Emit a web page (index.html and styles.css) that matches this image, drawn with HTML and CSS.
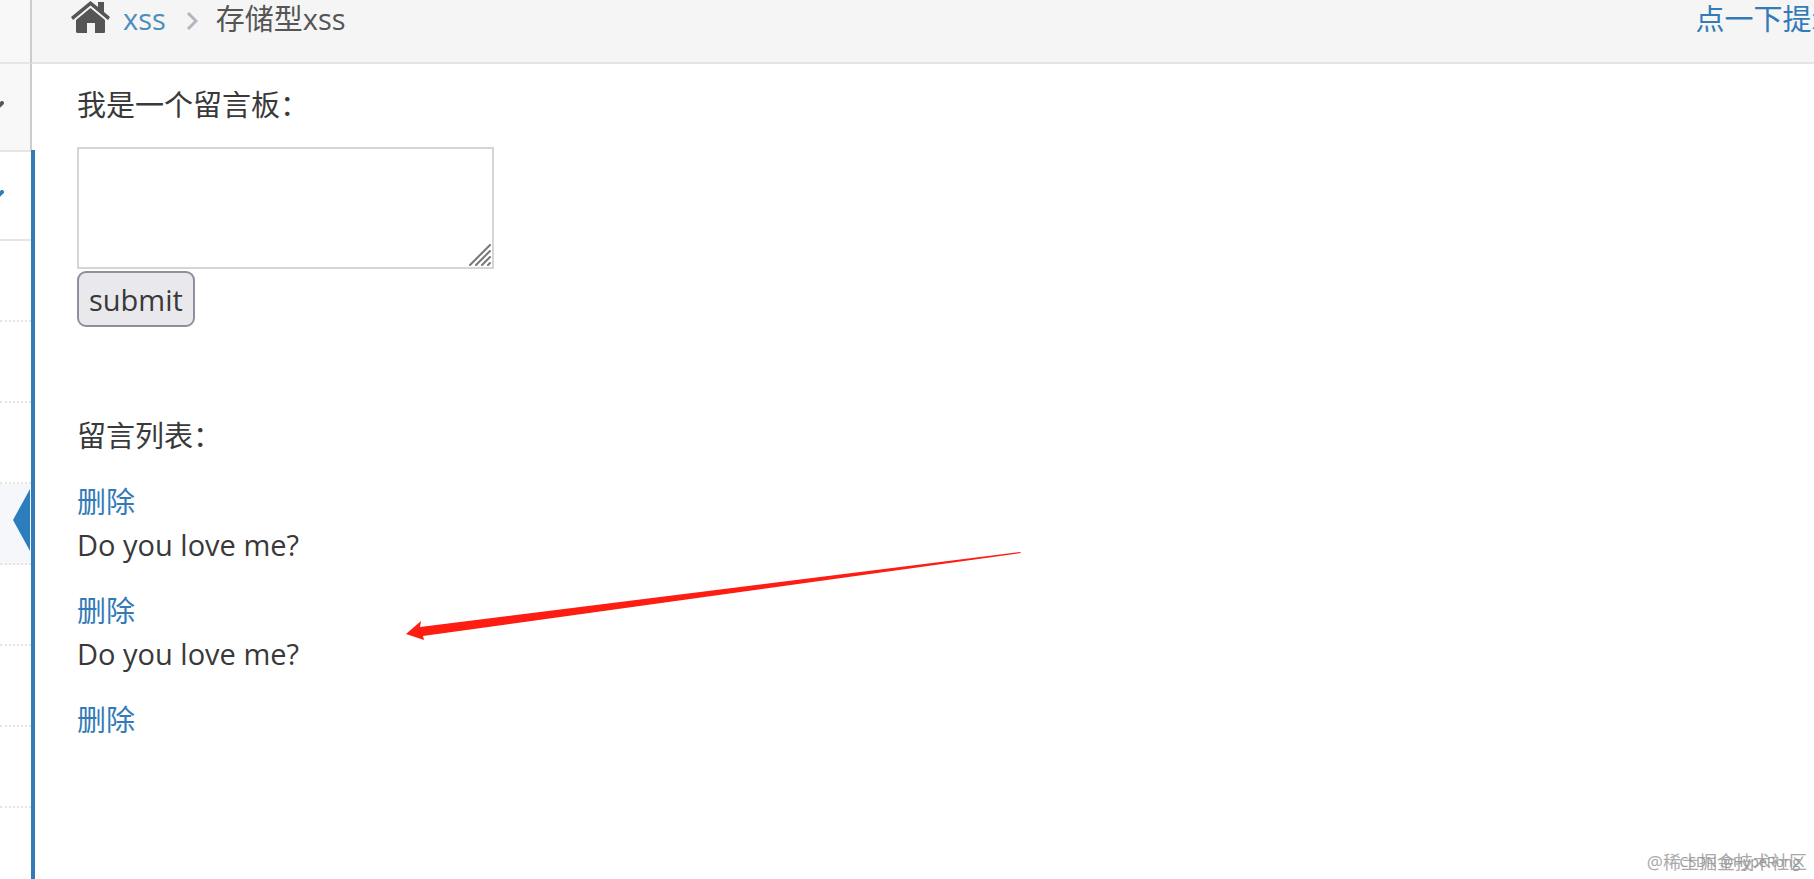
FILE: index.html
```
<!DOCTYPE html>
<html lang="zh-CN">
    <head>
        <meta charset="utf-8">
        <title>存储型xss</title>
        <link rel="stylesheet" href="styles.css">
    </head>
    <body>
        <div class="page">
            <nav class="sidebar" aria-label="menu">
                <div class="item first"></div>
                <div class="item second">
                    <svg class="arrow" width="16" height="12" viewBox="0 0 16 12"><path d="M2 2l6 6 6-6" fill="none" stroke="currentColor" stroke-width="4" stroke-linecap="round"/></svg>
                </div>
                <div class="opened">
                    <div class="item open">
                        <svg class="arrow" width="16" height="12" viewBox="0 0 16 12"><path d="M2 2l6 6 6-6" fill="none" stroke="currentColor" stroke-width="4" stroke-linecap="round"/></svg>
                    </div>
                    <ul class="submenu">
                        <li></li>
                        <li></li>
                        <li></li>
                        <li class="active">
                            <svg class="marker" width="17" height="62" viewBox="0 0 17 62"><path d="M17 0v62L0 31z" fill="#2b7dbc"/></svg>
                        </li>
                        <li></li>
                        <li></li>
                        <li></li>
                        <li></li>
                    </ul>
                </div>
            </nav>

            <div class="main">
                <div class="breadcrumbs">
                    <svg class="home" width="40" height="32" viewBox="0 0 40 32">
                        <path d="M19.500 0L27 6V1h6v10l6 5-2 3L19.500 4.500 2 19l-2-3z" fill="#555"/>
                        <path d="M19.500 7L34 19v12q0 1-1 1h-9V22h-8v10H7q-2 0-2-1V19z" fill="#555"/>
                    </svg>
                    <a class="crumb" href="#">xss</a>
                    <svg class="sep" width="12" height="18" viewBox="0 0 12 18"><path d="M2 1l8 8-8 8" fill="none" stroke="#b2b6bf" stroke-width="3"/></svg>
                    <span>存储型xss</span>
                    <a class="tip" href="#">点一下提示~</a>
                </div>

                <div class="content">
                    <form action="#" method="post">
                        <label class="title" for="message">我是一个留言板：</label>
                        <div class="box">
                            <textarea id="message" name="message"></textarea>
                            <svg class="grip" width="22" height="22" viewBox="0 0 22 22"><path d="M1 21L21 1M7 21L21 7M13 21l8-8M19 21l2-2" fill="none" stroke="#777" stroke-width="2" stroke-linecap="round"/></svg>
                        </div>
                        <button class="submit" type="submit">submit</button>
                    </form>

                    <div class="list">
                        <p>留言列表：</p>
                        <p><a href="#">删除</a><br>Do you love me?</p>
                        <p><a href="#">删除</a><br>Do you love me?</p>
                        <p><a href="#">删除</a></p>
                    </div>
                </div>
            </div>
        </div>

        <!-- red pointer over the second message -->
        <svg class="pointer" width="616" height="90" viewBox="0 0 616 90"><path d="M0 84L15 71l-1 6L614 2l1 1L17 86l1 4z" fill="#fd1d12"/></svg>

        <div class="mark">@稀土掘金技术社区</div>
        <div class="mark author">CSDN @HypeRong</div>
    </body>
</html>
```

FILE: styles.css
```
body {
    margin: 0;
    font-family: "Open Sans", "Noto Sans CJK SC", sans-serif;
    font-size: 29px;
    line-height: 43px;
    color: #393939;
    background-color: #fff;
    overflow: hidden;
}

a {
    color: #337ab7;
    text-decoration: none;
}

ul {
    list-style: none;
    margin: 0;
    padding: 0;
}

svg {
    display: block;
}

.page {
    display: flex;
    height: 100vh;
}

/* sidebar */
.sidebar {
    display: flex;
    flex-direction: column;
    flex: none;
    width: 35px;
    overflow: hidden;
}

.item {
    box-sizing: border-box;
    display: flex;
    flex: none;
    align-items: center;
    width: 32px;
    height: 64px;
    border-right: 2px solid #ccc;
    border-bottom: 2px solid #e5e5e5;
    background-color: #f8f8f8;
    color: #585858;
}

.item.second {
    height: 86px;
    border-bottom: none;
}

.item.open {
    width: auto;
    height: 91px;
    border-right: none;
    border-top: 2px solid #e5e5e5;
    background-color: #fff;
    color: #2b7dbc;
}

.arrow {
    flex: none;
    margin-left: -12px;
}

.opened {
    flex: 1;
    min-height: 0;
    border-right: 4px solid #337ab7;
}

.submenu li {
    box-sizing: border-box;
    display: flex;
    justify-content: flex-end;
    height: 81px;
    padding: 5px 1px 0 0;
    border-bottom: 2px dotted #e4e4e4;
}

.submenu .active {
    background-color: #f5f7fa;
}

/* main */
.main {
    flex: 1;
    min-width: 0;
}

.breadcrumbs {
    box-sizing: border-box;
    display: flex;
    align-items: flex-start;
    height: 64px;
    margin-left: -3px;
    padding-left: 39px;
    border-bottom: 2px solid #e5e5e5;
    background-color: #f5f5f5;
    color: #555;
    line-height: 38px;
    white-space: nowrap;
    overflow: hidden;
}

.home {
    margin-top: 1px;
}

.crumb {
    margin-left: 12px;
    color: #4c8fbd;
}

.sep {
    margin: 12px 18px 0 20px;
}

.tip {
    margin-left: auto;
    margin-right: -43px;
}

.content {
    padding: 19px 42px;
}

.title {
    display: block;
    margin-bottom: 21px;
}

.box {
    position: relative;
    width: 417px;
    margin-bottom: 2px;
}

textarea {
    box-sizing: border-box;
    display: block;
    width: 100%;
    height: 122px;
    padding: 8px;
    border: 2px solid #d5d5d5;
    font: inherit;
    resize: none;
}

.grip {
    position: absolute;
    right: 3px;
    bottom: 3px;
}

.submit {
    display: block;
    height: 56px;
    padding: 0 10px;
    border: 2px solid #8f8f9d;
    border-radius: 9px;
    background-color: #e9e9ed;
    color: #393939;
    font: inherit;
}

.list {
    margin-top: 87px;
}

.list p {
    margin: 0 0 23px;
}

.pointer {
    position: absolute;
    left: 406px;
    top: 550px;
}

.mark {
    position: absolute;
    right: 7px;
    bottom: 4px;
    font-size: 18px;
    line-height: 26px;
    color: #aaa;
}

.author {
    right: 14px;
    font-size: 14px;
    color: #999;
}
```
